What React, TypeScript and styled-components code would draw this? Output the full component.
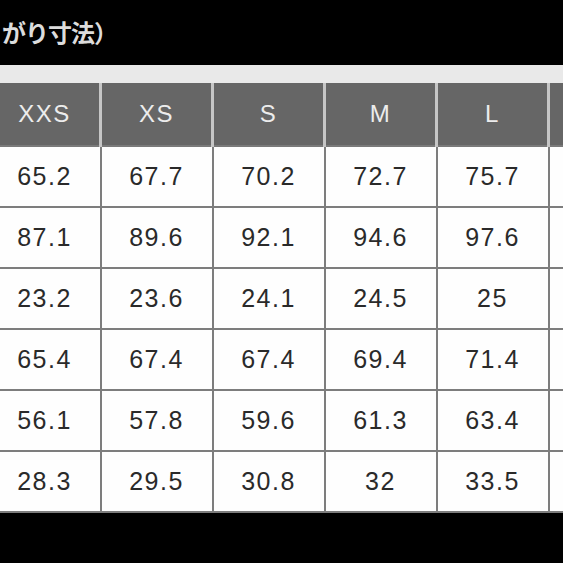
import React from "react";
import styled, { createGlobalStyle } from "styled-components";

const sizes = ["XXS", "XS", "S", "M", "L", ""];

const rows = [
  ["65.2", "67.7", "70.2", "72.7", "75.7", ""],
  ["87.1", "89.6", "92.1", "94.6", "97.6", ""],
  ["23.2", "23.6", "24.1", "24.5", "25", ""],
  ["65.4", "67.4", "67.4", "69.4", "71.4", ""],
  ["56.1", "57.8", "59.6", "61.3", "63.4", ""],
  ["28.3", "29.5", "30.8", "32", "33.5", ""],
];

const App = () => {
  return (
    <>
      <GlobalStyle />
      <Page>
        <TitleBar>
          <Title>がり寸法）</Title>
        </TitleBar>
        <Band />
        <SizeTable>
          <colgroup>
            {sizes.map((s, i) => (
              <col key={i} style={{ width: 112 }} />
            ))}
          </colgroup>
          <thead>
            <tr>
              {sizes.map((s, i) => (
                <HeadCell key={i}>{s}</HeadCell>
              ))}
            </tr>
          </thead>
          <tbody>
            {rows.map((row, i) => (
              <tr key={i}>
                {row.map((v, j) => (
                  <Cell key={j}>{v}</Cell>
                ))}
              </tr>
            ))}
          </tbody>
        </SizeTable>
      </Page>
    </>
  );
};

export default App;

const GlobalStyle = createGlobalStyle`
  html, body {
    margin: 0;
    padding: 0;
    background: #000;
    overflow: hidden;
  }
`;

const Page = styled.div`
  width: 563px;
  height: 563px;
  overflow: hidden;
  background: #000;
  display: flex;
  flex-direction: column;
  font-family: "Liberation Sans", Arial, "Noto Sans CJK JP", sans-serif;
`;

const TitleBar = styled.div`
  height: 65px;
  flex: 0 0 65px;
  display: flex;
  align-items: center;
  padding-bottom: 3px;
  padding-left: 2px;
  box-sizing: border-box;
`;

const Title = styled.div`
  font-family: "Noto Sans CJK JP", sans-serif;
  font-weight: bold;
  font-size: 24px;
  letter-spacing: -1px;
  color: #dcdcdc;
`;

const Band = styled.div`
  flex: 0 0 18px;
  background: #e9e9e9;
`;

const SizeTable = styled.table`
  flex: 0 0 auto;
  margin-left: -13px;
  width: 672px;
  table-layout: fixed;
  border-collapse: collapse;
  background: #fefefe;
`;

const HeadCell = styled.th`
  height: 62px;
  padding: 0;
  background: #666;
  color: #ececec;
  font-weight: normal;
  font-size: 24px;
  letter-spacing: 1.5px;
  text-align: center;
  border-left: 3px solid #c6c6c6;
  border-right: 3px solid #c6c6c6;
  border-bottom: 2px solid #7a7a7a;
`;

const Cell = styled.td`
  height: 59px;
  padding: 0;
  color: #2a2a2a;
  font-size: 25px;
  letter-spacing: 1.5px;
  text-align: center;
  border: 2px solid #7d7d7d;
`;
